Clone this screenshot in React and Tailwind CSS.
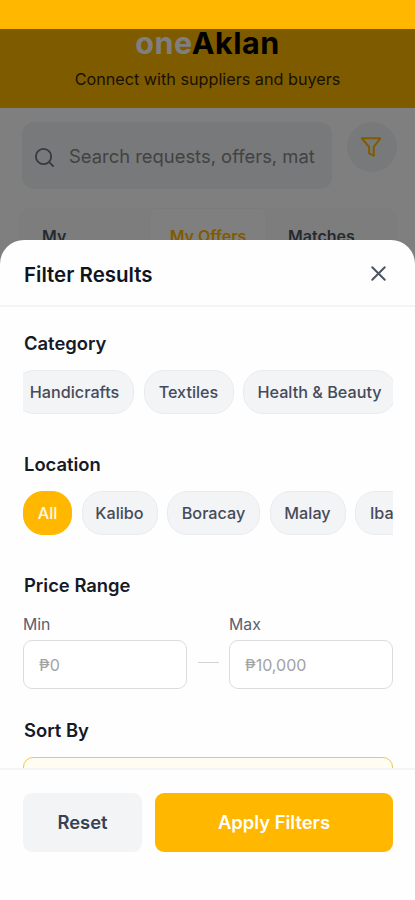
import { Search, X } from "lucide-react";

const categories = [
  { label: "Handicrafts", box: "w-[120px] -ml-[9px] pl-px" },
  { label: "Textiles", box: "w-[90px]" },
  { label: "Health & Beauty", box: "w-[153px]" },
];

const locations = [
  { label: "All", box: "w-[49px]", active: true },
  { label: "Kalibo", box: "w-[76px]" },
  { label: "Boracay", box: "w-[93px]" },
  { label: "Malay", box: "w-[76px]" },
  { label: "Ibajay", box: "w-[76px]" },
];

function Chip({ label, box, active }) {
  const tone = active
    ? "border-[#ffb700] bg-[#ffb700] text-white/90"
    : "border-[#e9ebee] bg-[#f3f4f6] text-[#454b5a]";
  return (
    <button className={`${box} ${tone} h-11 shrink-0 whitespace-nowrap rounded-[20px] border text-[16.2px] font-[450]`}>
      {label}
    </button>
  );
}

function SectionTitle({ children }) {
  return <h3 className="pl-px text-[18.4px] font-semibold leading-[26px] text-[#151a26]">{children}</h3>;
}

function ChipSection({ title, items }) {
  return (
    <section className="mb-[37px]">
      <SectionTitle>{title}</SectionTitle>
      <div className="mt-[14px] flex gap-[9.5px] overflow-hidden">
        {items.map((item) => (
          <Chip key={item.label} {...item} />
        ))}
      </div>
    </section>
  );
}

function PriceField({ label, placeholder }) {
  return (
    <label className="block w-[164px]">
      <span className="block h-[26px] text-[15.8px] leading-[22px] text-[#596070]">{label}</span>
      <input
        placeholder={placeholder}
        className="block h-[49px] w-full rounded-[9px] border border-[#dadcdf] bg-white px-[15px] text-[16px] placeholder:text-[#a2a2a2]"
      />
    </label>
  );
}

function Page() {
  return (
    <div>
      <header className="h-[108px] bg-[#ffb700] pt-[25px] text-center">
        <h1 className="text-[30.5px] font-bold leading-9 tracking-[0.5px] text-black">
          <span className="text-white">one</span>Aklan
        </h1>
        <p className="mt-[7px] text-[16.2px] leading-[22px] text-[#332400]">Connect with suppliers and buyers</p>
      </header>
      <div className="flex items-start justify-between pl-[22px] pr-[18px] pt-[14px]">
        <div className="flex h-[67px] w-[310px] items-center rounded-xl bg-[#f1f3f5] pl-[11px] pt-[3px]">
          <Search className="size-[23px] shrink-0 text-[#6b7280]" strokeWidth={1.9} />
          <span className="ml-[13px] w-[246px] overflow-hidden whitespace-nowrap text-[18.4px] text-[#858585]">
            Search requests, offers, matches
          </span>
        </div>
        <button className="flex size-[50px] items-center justify-center rounded-full bg-[#f1f3f5] pr-[2px] text-[#ffb700]">
          <svg viewBox="0 0 24 24" className="size-[22px]" fill="none" stroke="currentColor" strokeWidth="2.2" strokeLinejoin="round">
            <path d="M2 2.5h20l-7 9.5v9.5l-5-2.5v-7z" />
          </svg>
        </button>
      </div>
      <nav className="mx-[18px] mt-[19px] flex h-[56px] rounded-xl bg-[#fafafa] text-[16px] font-semibold leading-6 text-[#4b5563]">
        <span className="w-[131px] pl-6 pt-[16px]">My<br />Requests</span>
        <span className="w-[118px] rounded-lg border border-[#f7f7f7] bg-white pt-[15px] text-center text-[#ffb700]">My Offers</span>
        <span className="pl-[21px] pt-[16px]">Matches</span>
      </nav>
    </div>
  );
}

export default function App() {
  return (
    <div className="relative h-[900px] w-[415px] overflow-hidden bg-white font-['Inter',sans-serif]">
      <Page />
      <div className="absolute inset-x-0 bottom-0 top-[29px] bg-black/50" />
      <div className="absolute inset-x-0 bottom-0 top-[240px] flex flex-col overflow-hidden rounded-t-[24px] bg-[#fefefe]">
        <div className="flex h-[67px] shrink-0 items-center justify-between border-b-2 border-[#f4f4f5] pl-6 pr-[24px]">
          <h2 className="pt-[6px] text-[20.5px] font-semibold text-[#10141f]">Filter Results</h2>
          <X className="mt-[2px] size-[25px] text-[#4b5563]" strokeWidth={1.9} />
        </div>
        <div className="min-h-0 flex-1 overflow-hidden pl-[23px] pr-[22px] pt-[23px]">
          <ChipSection title="Category" items={categories} />
          <ChipSection title="Location" items={locations} />
          <section>
            <SectionTitle>Price Range</SectionTitle>
            <div className="mt-[16px] flex items-end justify-between">
              <PriceField label="Min" placeholder="₱0" />
              <div className="mb-[26px] h-px w-[21px] bg-[#d1d3d6]" />
              <PriceField label="Max" placeholder="₱10,000" />
            </div>
          </section>
          <section className="mt-[28px]">
            <SectionTitle>Sort By</SectionTitle>
            <div className="mt-[14px] h-14 rounded-[10px] border-[1.5px] border-[#ecc94f] bg-[#fffdf2]" />
          </section>
        </div>
        <div className="flex h-[132px] shrink-0 gap-[13px] border-t-2 border-[#f4f4f5] pl-[23px] pr-[22px] pt-[23px]">
          <button className="h-[59px] w-[119px] rounded-[9px] bg-[#f3f4f6] text-[18.4px] font-semibold text-[#374151]">Reset</button>
          <button className="h-[59px] flex-1 rounded-[9px] bg-[#ffb700] text-[18.4px] font-semibold text-white">Apply Filters</button>
        </div>
      </div>
    </div>
  );
}
